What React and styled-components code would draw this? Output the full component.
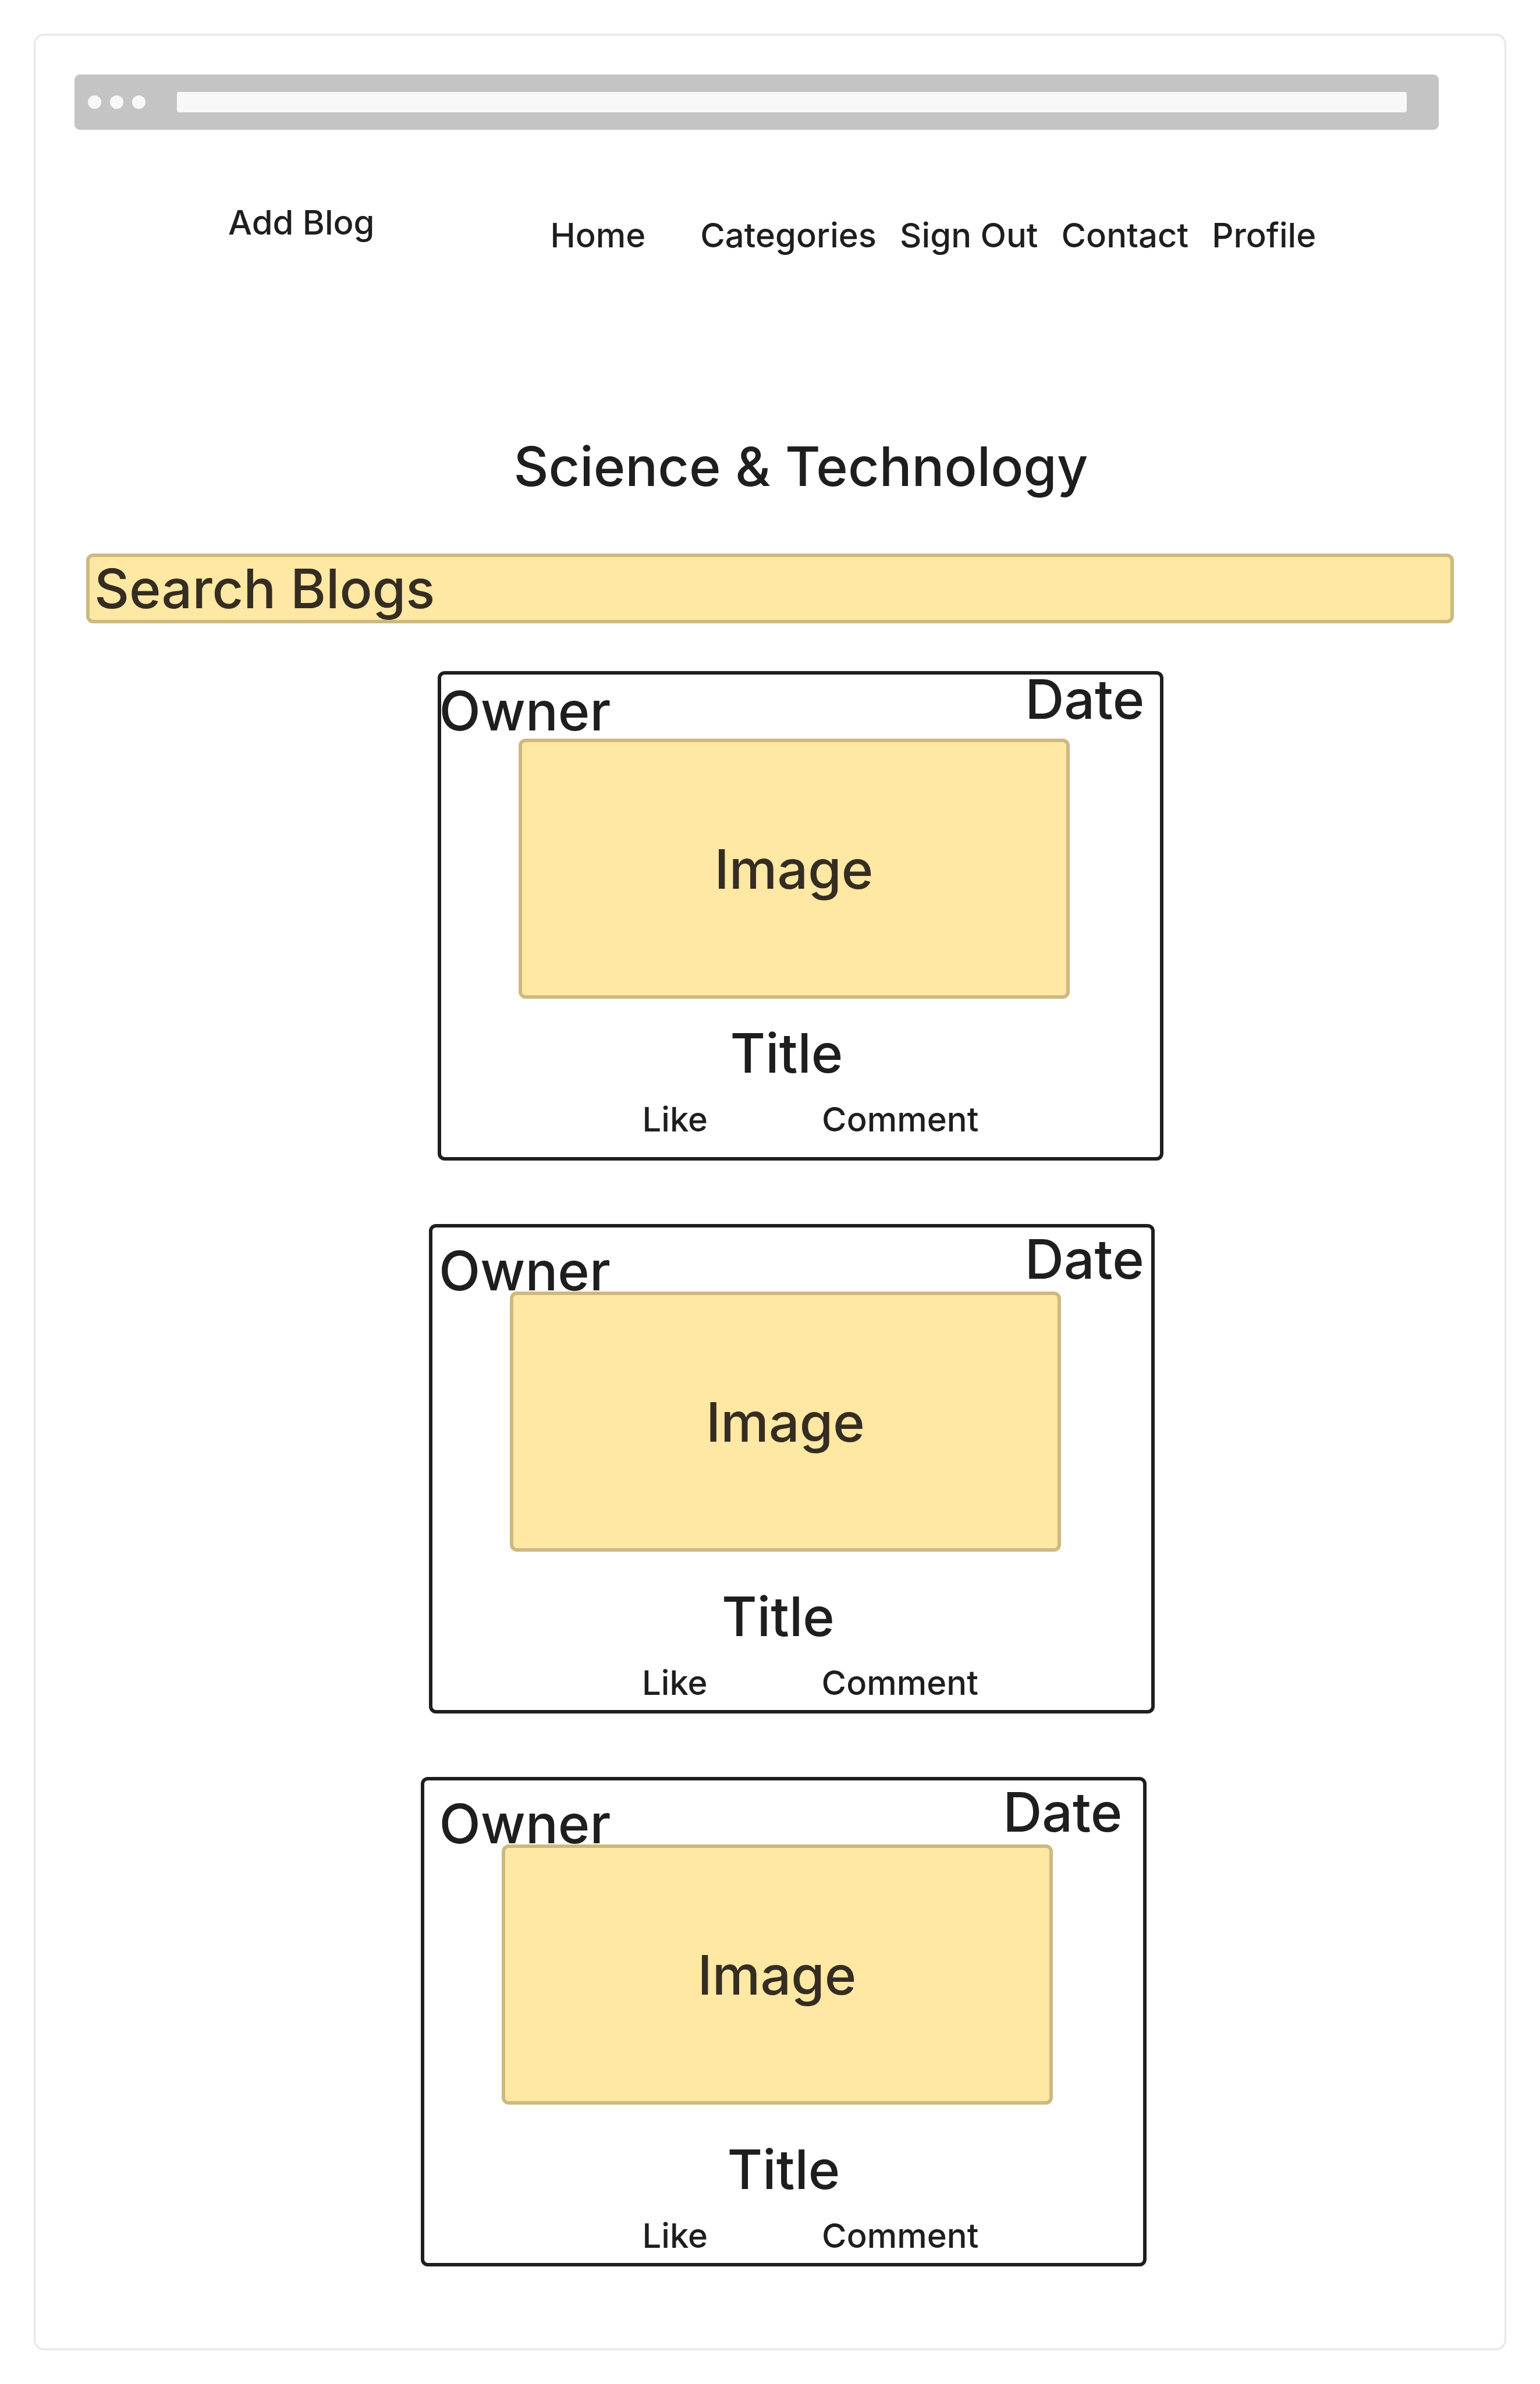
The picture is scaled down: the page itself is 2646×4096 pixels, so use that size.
import React, { useState } from "react";
import styled, { createGlobalStyle } from "styled-components";

const ink = "#1e1e1e";
const inkOnYellow = "#352d21";
const yellow = "#ffe8a3";
const yellowEdge = "#cdb980";

const GlobalStyle = createGlobalStyle`
  * {
    box-sizing: border-box;
  }
  body {
    margin: 0;
    background: #ffffff;
    color: ${ink};
    font-family: Inter, "Liberation Sans", sans-serif;
    font-weight: 500;
  }
`;

const Frame = styled.div`
  display: flex;
  flex-direction: column;
  margin: 58px;
  padding: 67px 67px 141px;
  border: 3px solid #e6e6e6;
  border-radius: 18px;
`;

const BrowserBar = styled.div`
  display: flex;
  align-items: center;
  gap: 54px;
  height: 95px;
  margin-right: 46px;
  padding: 0 55px 0 23px;
  border-radius: 9px;
  background: #c4c4c4;
`;

const Dots = styled.div`
  display: flex;
  gap: 15px;
`;

const Dot = styled.span`
  width: 23px;
  height: 23px;
  border-radius: 50%;
  background: #f8f8f8;
`;

const AddressBar = styled.div`
  flex: 1;
  height: 35px;
  border-radius: 4px;
  background: #f8f8f8;
`;

const Header = styled.header`
  display: flex;
  align-items: flex-start;
  gap: 302px;
  padding: 135px 0 0 264px;
`;

const TextButton = styled.button`
  padding: 0;
  border: 0;
  background: none;
  color: inherit;
  font: inherit;
  font-size: 58px;
  line-height: 48px;
  white-space: nowrap;
  cursor: pointer;
`;

const Nav = styled.nav`
  display: flex;
  gap: 40px;
  padding-top: 22px;
`;

const NavLink = styled.a`
  margin-right: ${(p) => (p.$spaced ? 54 : 0)}px;
  color: inherit;
  font-size: 58px;
  line-height: 48px;
  text-decoration: none;
  white-space: nowrap;
`;

const PageTitle = styled.h1`
  margin: 333px 0 110px;
  padding-left: 106px;
  font-size: 93px;
  font-weight: 500;
  line-height: 80px;
  text-align: center;
`;

const SearchInput = styled.input`
  width: auto;
  height: 120px;
  margin: 0 20px;
  padding: 0 8px;
  border: 6px solid ${yellowEdge};
  border-radius: 12px;
  outline: 0;
  background: ${yellow};
  color: ${inkOnYellow};
  font: inherit;
  font-size: 93px;

  &::placeholder {
    color: inherit;
    opacity: 1;
  }
`;

const BlogList = styled.main`
  display: flex;
  flex-direction: column;
  align-items: center;
  gap: 109px;
  padding: 82px 0 0 46px;
`;

const Card = styled.article`
  width: 1247px;
  max-width: 100%;
  min-height: 841px;
  margin-left: ${(p) => p.$shift}px;
  border-radius: 12px;
  box-shadow: inset 0 0 0 6px ${ink};
`;

const CardHeader = styled.div`
  display: flex;
  align-items: flex-start;
  justify-content: space-between;
  height: 116px;
  padding: ${(p) => (p.$roomy ? 20 : 8)}px ${(p) => p.$end}px 0 ${(p) => p.$start}px;
  font-size: 93px;
  line-height: 80px;
`;

const Owner = styled.span`
  margin-top: 20px;
`;

const Thumbnail = styled.div`
  display: flex;
  align-items: center;
  justify-content: center;
  height: 447px;
  margin: 0 161px 0 139px;
  border: 6px solid ${yellowEdge};
  border-radius: 12px;
  background: ${yellow};
  color: ${inkOnYellow};
  font-size: 93px;
  line-height: 80px;
`;

const CardTitle = styled.h2`
  margin: ${(p) => (p.$roomy ? 71 : 53)}px 0 50px;
  padding-left: ${(p) => p.$start}px;
  font-size: 93px;
  font-weight: 500;
  line-height: 80px;
`;

const Actions = styled.div`
  display: flex;
  gap: 196px;
  padding-left: ${(p) => p.$start}px;
`;

const links = ["Home", "Categories", "Sign Out", "Contact", "Profile"];

const blogs = [
  { id: 1, roomy: false, shift: 58, owner: 3, date: 32, title: 503, actions: 352 },
  { id: 2, roomy: true, shift: 29, owner: 17, date: 18, title: 503, actions: 366 },
  { id: 3, roomy: true, shift: 0, owner: 32, date: 41, title: 527, actions: 381 },
];

function BlogCard({ blog }) {
  return (
    <Card $shift={blog.shift}>
      <CardHeader $roomy={blog.roomy} $start={blog.owner} $end={blog.date}>
        <Owner>Owner</Owner>
        <span>Date</span>
      </CardHeader>
      <Thumbnail>Image</Thumbnail>
      <CardTitle $roomy={blog.roomy} $start={blog.title}>
        Title
      </CardTitle>
      <Actions $start={blog.actions}>
        <TextButton type="button">Like</TextButton>
        <TextButton type="button">Comment</TextButton>
      </Actions>
    </Card>
  );
}

export default function App() {
  const [query, setQuery] = useState("");

  return (
    <>
      <GlobalStyle />
      <Frame>
        <BrowserBar>
          <Dots>
            <Dot />
            <Dot />
            <Dot />
          </Dots>
          <AddressBar />
        </BrowserBar>
        <Header>
          <TextButton type="button">Add Blog</TextButton>
          <Nav>
            {links.map((label) => (
              <NavLink key={label} href="#" $spaced={label === "Home"}>
                {label}
              </NavLink>
            ))}
          </Nav>
        </Header>
        <PageTitle>Science &amp; Technology</PageTitle>
        <SearchInput
          type="search"
          aria-label="Search Blogs"
          placeholder="Search Blogs"
          value={query}
          onChange={(e) => setQuery(e.target.value)}
        />
        <BlogList>
          {blogs.map((blog) => (
            <BlogCard key={blog.id} blog={blog} />
          ))}
        </BlogList>
      </Frame>
    </>
  );
}
